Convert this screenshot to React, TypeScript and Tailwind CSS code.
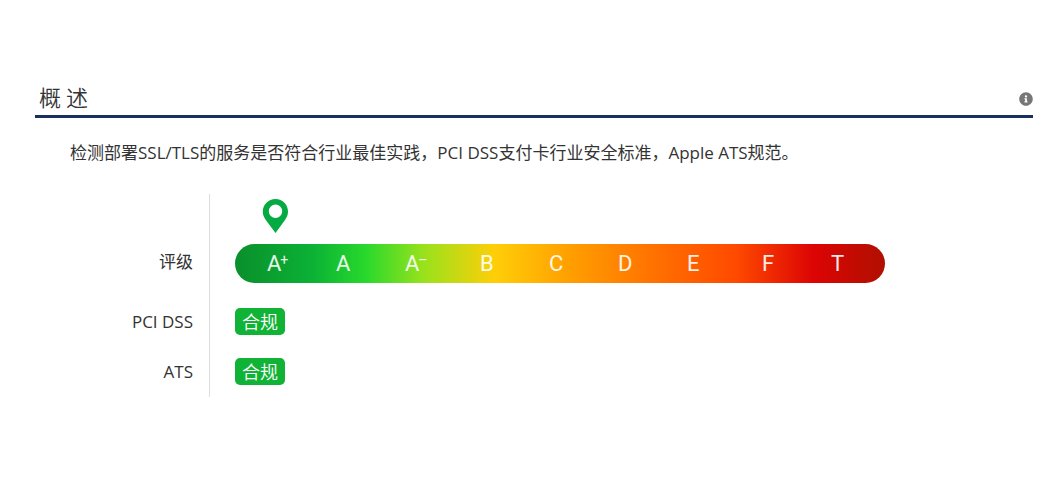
import { FaInfoCircle } from "react-icons/fa";

const grades = [
  { letter: "A", mark: "+" },
  { letter: "A" },
  { letter: "A", mark: "–" },
  { letter: "B" },
  { letter: "C" },
  { letter: "D" },
  { letter: "E" },
  { letter: "F" },
  { letter: "T" },
];

function Pin() {
  return (
    <svg viewBox="0 0 26 34" className="ml-[27px] h-[34px] w-[26px] fill-[#05ab42]" aria-hidden="true">
      <path
        fillRule="evenodd"
        d="M13.500 0C6.300 0 .8 5.600.8 12.700c0 3.200 1.200 5.600 3 8.300L13.500 34l9.500-13c1.800-2.700 3-5.100 3-8.300C26 5.600 20.700 0 13.500 0Zm0 5.600a6.700 6.700 0 1 1 0 13.400 6.700 6.700 0 0 1 0-13.400Z"
      />
    </svg>
  );
}

function GradeBar() {
  return (
    <div className="mt-[11px] grid h-[39px] w-full max-w-[650px] grid-cols-[69fr_69fr_75fr_69fr_69fr_69fr_75fr_69fr_54fr] items-center rounded-full bg-[linear-gradient(90deg,#0a8f2c_0%,#0bb235_12%,#28d82c_20%,#98e21c_29%,#ffce08_40%,#ff9d00_52%,#ff6c00_66%,#ff4a00_77%,#dc0404_89%,#b01000_100%)] pt-px pl-8 font-['Roboto','Liberation_Sans',sans-serif] text-[22px] leading-6 text-white/90">
      {grades.map(({ letter, mark }, i) => (
        <span key={i} className="flex items-start">
          {letter}
          {mark && <span className="-ml-px text-sm leading-4">{mark}</span>}
        </span>
      ))}
    </div>
  );
}

function Badge() {
  return (
    <span className="rounded-[5px] bg-[#10b335] px-[7px] pt-px text-lg leading-[26px] font-[350] text-white">
      合规
    </span>
  );
}

export default function App() {
  return (
    <main className="min-h-screen bg-white pt-20 pr-[19px] pl-[35px] font-['Open_Sans','Noto_Sans_CJK_SC',sans-serif] text-[#333]">
      <header className="flex h-[38px] items-start justify-between border-b-3 border-[#17305f] pl-1">
        <h1 className="font-['Noto_Sans_CJK_SC',sans-serif] text-[22px] leading-8 font-[350]">概 述</h1>
        <button type="button" aria-label="说明" className="pt-3 text-[#777]">
          <FaInfoCircle className="size-[14px]" />
        </button>
      </header>
      <p className="mt-[21px] pl-[35px] text-[17px] leading-7">
        检测部署SSL/TLS的服务是否符合行业最佳实践，PCI DSS支付卡行业安全标准，Apple ATS规范。
      </p>
      <dl className="mt-[27px] grid grid-cols-[175px_1fr] text-[17px] leading-6">
        <dt className="flex items-end justify-end border-r border-[#ddd] pr-4 pb-[23px]">评级</dt>
        <dd className="pt-[5px] pb-[14px] pl-[25px]">
          <Pin />
          <GradeBar />
        </dd>
        <dt className="flex h-[50px] items-center justify-end border-r border-[#ddd] pr-4">PCI DSS</dt>
        <dd className="flex items-center pb-px pl-[25px]">
          <Badge />
        </dd>
        <dt className="flex h-[50px] items-center justify-end border-r border-[#ddd] pr-4">ATS</dt>
        <dd className="flex items-center pb-px pl-[25px]">
          <Badge />
        </dd>
      </dl>
    </main>
  );
}
